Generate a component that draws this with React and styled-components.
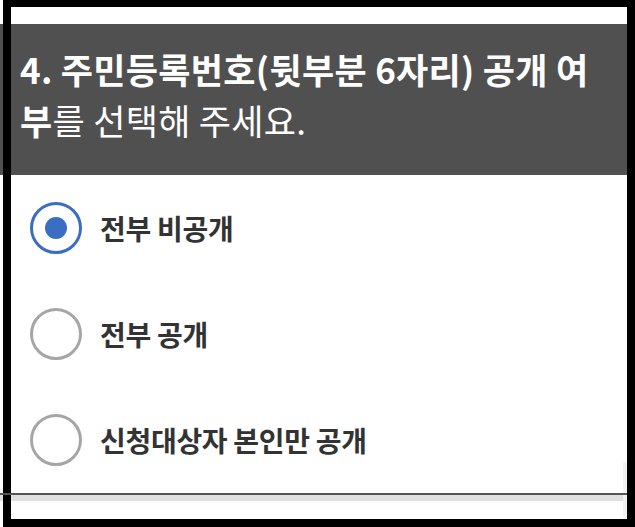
import React from "react";
import styled, { createGlobalStyle } from "styled-components";

const options = [
  { id: "none", label: "전부 비공개", checked: true },
  { id: "all", label: "전부 공개", checked: false },
  { id: "self", label: "신청대상자 본인만 공개", checked: false },
];

const App = () => {
  return (
    <Page>
      <GlobalStyle />
      <TopGap />
      <Header>
        <Title>
          <strong>4. 주민등록번호(뒷부분 6자리) 공개 여부</strong>를 선택해 주세요.
        </Title>
      </Header>
      <OptionList>
        {options.map((o) => (
          <OptionRow key={o.id}>
            <Radio checked={o.checked}>{o.checked && <Dot />}</Radio>
            <Label>{o.label}</Label>
          </OptionRow>
        ))}
      </OptionList>
      <Divider />
      <Band />
      <ScrollStrip />
      <Frame />
    </Page>
  );
};

export default App;

const GlobalStyle = createGlobalStyle`
  html, body {
    margin: 0;
    padding: 0;
    background: #ffffff;
  }
  body {
    font-family: "Noto Sans CJK KR", "Noto Sans", sans-serif;
  }
`;

const Page = styled.div`
  position: relative;
  width: 635px;
  height: 527px;
  overflow: hidden;
  background: #ffffff;
`;

const TopGap = styled.div`
  height: 24px;
`;

const Header = styled.div`
  width: 627px;
  box-sizing: border-box;
  height: 151px;
  padding: 19px 30px 0 20px;
  background: #505050;
`;

const Title = styled.div`
  color: #ffffff;
  font-size: 35px;
  line-height: 51px;
  font-weight: 400;
  letter-spacing: 0.3px;

  strong {
    font-weight: 700;
  }
`;

const OptionList = styled.div`
  display: flex;
  flex-direction: column;
  width: 627px;
`;

const OptionRow = styled.div`
  display: flex;
  align-items: center;
  gap: 18px;
  height: 106px;
  padding-left: 30px;
  box-sizing: border-box;
`;

const Radio = styled.div`
  width: 52px;
  height: 52px;
  box-sizing: border-box;
  border-radius: 50%;
  border: 3.5px solid ${(p) => (p.checked ? "#3b6dc2" : "#a6a6a6")};
  display: flex;
  align-items: center;
  justify-content: center;
  filter: blur(0.7px);
  flex-shrink: 0;
`;

const Dot = styled.div`
  width: 22px;
  height: 22px;
  border-radius: 50%;
  background: #3b6dc2;
`;

const Label = styled.div`
  color: #333333;
  font-size: 28px;
  font-weight: 700;
  letter-spacing: -0.3px;
`;

const Divider = styled.div`
  position: relative;
  z-index: 3;
  width: 627px;
  height: 2px;
  background: #555555;
`;

const Band = styled.div`
  width: 627px;
  height: 6px;
  background: #e0e0e0;
`;

const ScrollStrip = styled.div`
  position: absolute;
  left: 623px;
  top: 462px;
  width: 4px;
  height: 56px;
  background: #f3f3f3;
`;

const Frame = styled.div`
  position: absolute;
  left: 3px;
  top: 0;
  right: 0;
  bottom: 0;
  border-style: solid;
  border-color: #000000;
  border-width: 7px 8px 8px 8px;
  z-index: 2;
  pointer-events: none;
`;
